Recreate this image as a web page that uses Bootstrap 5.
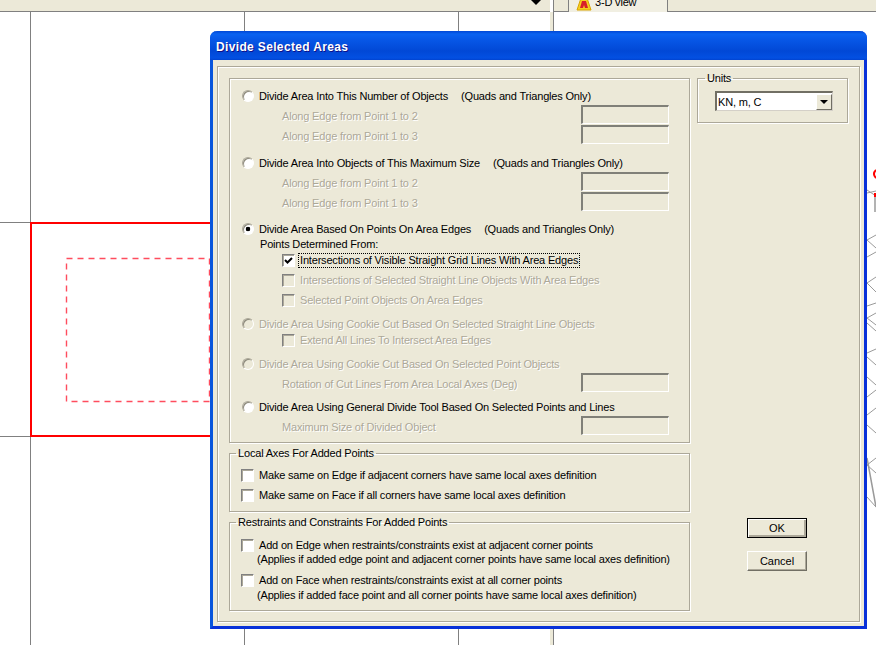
<!DOCTYPE html>
<html lang="en">
<head>
    <meta charset="UTF-8">
    <title>Divide Selected Areas</title>
    <link href="https://cdn.jsdelivr.net/npm/bootstrap@5.3.0/dist/css/bootstrap.min.css" rel="stylesheet">
    <style>
        html, body { margin: 0; background: #fff; overflow: hidden; }
        body { font-family: "Liberation Sans", sans-serif; font-size: 11px; letter-spacing: -.18px; line-height: 16px; color: #000; }
        .desk { position: relative; width: 876px; height: 645px; overflow: hidden; background: #fff; }
        .desk-art { position: absolute; left: 0; top: 0; }

        /* top strip of the main program */
        .top-strip { position: relative; height: 12px; }
        .strip-left { width: 550px; background: #ece9d8; border-bottom: 1px solid #808080; position: relative; }
        .strip-arrow { position: absolute; left: 531px; top: 0; border: 5px solid transparent; border-top-color: #000; border-bottom: 0; }
        .strip-gap { width: 15px; background: #ece9d8; border-bottom: 1px solid #808080; border-left: 1px solid #808080; margin-left: 3px; }
        .strip-tab { width: 100px; background: #f1efe2; border-left: 1px solid #808080; border-right: 1px solid #808080; overflow: hidden; padding-left: 7px; gap: 3px; font-size: 11px; line-height: 10px; }
        .strip-tab span { margin-top: -3px; }
        .strip-rest { background: #ece9d8; border-bottom: 1px solid #808080; }

        /* dialog */
        .xp-window { position: absolute; left: 210px; top: 31px; width: 657px; height: 598px; background: #ece9d8; border-radius: 7px 7px 0 0; border-left: 3px solid #0855dd; border-right: 3px solid #0831d9; border-bottom: 3px solid #0831d9; }
        .xp-title { height: 29px; margin: 0 -3px; padding-left: 6px; border-radius: 7px 7px 0 0; color: #fff; font-family: "Liberation Sans", sans-serif; font-weight: 700; font-size: 12px; letter-spacing: .35px; line-height: 33px; text-shadow: 1px 1px 0 #0f1089; background: linear-gradient(180deg, #0046d5 0, #0a62f0 3px, #0758e8 8px, #0148d6 20px, #0350e2 27px, #0143cf 29px); }
        .xp-frame { margin: 6px 4px 3px; height: 556px; padding: 11px 11px 10px 11px; border: 1px solid #aca899; box-shadow: 1px 1px 0 #fff, inset 1px 1px 0 #fff; gap: 7px; }
        .col-left { width: 462px; }
        .col-right { width: 151px; }
        .etched { border: 1px solid #aca899; box-shadow: 1px 1px 0 #fff, inset 1px 1px 0 #fff; margin: 0; min-width: 0; }
        .etched legend { float: none; width: auto; margin: 0 0 0 -5px; padding: 0 2px; font-size: 11px; line-height: 14px; }
        .group-main { height: 365px; padding: 9px 0 0 12px; }
        .group-axes { height: 66px; margin-top: 3px; padding: 7px 0 0 11px; }
        .group-restr { height: 96px; margin-top: 3px; padding: 8px 0 0 11px; }
        .group-units { height: 52px; padding: 0 14px 0 16px; margin-top: -7px; }
        .group-units legend { margin-left: -9px; }

        .opt-row { height: 16px; white-space: nowrap; }
        .sp-0 { margin-top: 0; } .sp-4 { margin-top: 4px; } .sp-8 { margin-top: 8px; }
        .sp-7 { margin-top: 7px; } .sp-10 { margin-top: 10px; } .sp-11 { margin-top: 11px; }
        .sp-1 { margin-top: -1px; } .sp-5 { margin-top: 5px; } .sp-n2 { margin-top: -2px; }
        .off { color: #aca899; text-shadow: 1px 1px 0 #fff; }
        .ind-sub { margin-left: 40px; }
        .ind-head { margin-left: 18px; }
        .ind-note { margin-left: 16px; }
        .note { margin-left: 8px; }
        .focus-box { outline: 1px dotted #000; outline-offset: 0; padding: 0 1px; line-height: 13px; margin-left: 4px; }

        .xp-radio, .xp-check { appearance: none; -webkit-appearance: none; flex: none; margin: 0; background-color: #fff; }
        .xp-radio { width: 12px; height: 12px; border-radius: 50%; border: 1px solid #aca899; border-right-color: #fff; border-bottom-color: #fff; box-shadow: inset 1px 1px 0 #8d8a7c; }
        .xp-radio:checked { background-image: radial-gradient(circle at 50% 50%, #000 0, #000 2px, transparent 2.6px); }
        .xp-radio:disabled { background-color: #ece9d8; }
        .xp-check { width: 13px; height: 13px; border: 1px solid #fff; border-top-color: #808080; border-left-color: #808080; box-shadow: inset 1px 1px 0 #aca899; }
        .xp-check.ind-check { margin-left: 40px; }
        .xp-check:disabled { background-color: #ece9d8; }
        .xp-check:checked { background-image: url("data:image/svg+xml,%3Csvg xmlns='http://www.w3.org/2000/svg' width='11' height='11'%3E%3Cpath d='M2 5l2.5 2.5L9 3' fill='none' stroke='%23000' stroke-width='2'/%3E%3C/svg%3E"); background-repeat: no-repeat; background-position: center; }
        .gap-lbl { gap: 5px; }

        .sunken { width: 88px; height: 19px; flex: none; margin-left: auto; margin-right: 20px; margin-top: -3px; border: 2px solid #808078; border-right: 1px solid #fff; border-bottom: 1px solid #fff; background: #ece9d8; }
        .combo { width: 118px; height: 20px; margin-top: 6px; margin-left: 1px; background: #fff; border: 2px solid #716f64; border-right-color: #d4d0c8; border-bottom-color: #d4d0c8; border-right-width: 1px; border-bottom-width: 1px; padding-left: 1px; font-size: 11px; }
        .combo-text { line-height: 16px; }
        .combo-btn { width: 16px; height: 16px; margin-left: auto; background: #ece9d8; border: 1px solid #fff; border-right-color: #716f64; border-bottom-color: #716f64; }
        .combo-btn i { border: 4px solid transparent; border-top-color: #000; border-bottom: 0; display: block; }

        .xp-btn { width: 60px; height: 20px; padding: 0; border-radius: 0; font-size: 11px; line-height: 16px; color: #000; background: #ece9d8; border: 1px solid #fff; border-right-color: #716f64; border-bottom-color: #716f64; box-shadow: inset -1px -1px 0 #aca899; }
        .xp-btn.is-default { border: 1px solid #000; box-shadow: inset 1px 1px 0 #fff, inset -2px -2px 0 #aca899; }
        .btn-stack { margin-top: auto; margin-left: 50px; margin-bottom: 40px; gap: 13px; }
    </style>
</head>
<body>
<div class="desk">
    <svg class="desk-art" width="876" height="645">
        <g stroke="#808080" stroke-width="1" shape-rendering="crispEdges">
            <line x1="30.5" y1="12" x2="30.5" y2="645"/>
            <line x1="244.5" y1="12" x2="244.5" y2="645"/>
            <line x1="458.5" y1="12" x2="458.5" y2="645"/>
            <line x1="0" y1="222.5" x2="30" y2="222.5"/>
            <line x1="0" y1="436.5" x2="30" y2="436.5"/>
        </g>
        <rect x="550" y="12" width="3" height="633" fill="#ece9d8"/>
        <rect x="553" y="0" width="1" height="645" fill="#808080"/>
        <rect x="31" y="223" width="190" height="213" fill="none" stroke="#ff0000" stroke-width="2"/>
        <rect x="66.5" y="258.5" width="143" height="143" fill="none" stroke="#ff4d5e" stroke-width="1.4" stroke-dasharray="6 5"/>
        <g stroke="#9a9a9a" stroke-width="1" fill="none">
            <path d="M867 193L876 191M867 190L876 196M867 240L876 235M867 240L876 248M867 257L876 252"/>
            <path d="M867 283L876 277M867 283L876 292M867 306L876 303M867 318L876 313M867 318L876 325M867 323L876 331"/>
            <path d="M867 353L876 349M867 357L876 365M867 377L876 385M867 397L876 390M867 415L876 408M867 425L876 433"/>
            <path d="M867 465L876 458M867 465L876 473M867 497L876 507"/>
            <path d="M867 458L876 507M875 197V212" stroke-width="1.5"/>
        </g>
        <path d="M876 170Q872 174 876 178" fill="none" stroke="#f00" stroke-width="2"/>
        <rect x="874" y="193" width="2" height="4" fill="#f00"/>
    </svg>

    <div class="top-strip d-flex">
        <div class="strip-left"><span class="strip-arrow"></span></div>
        <div class="strip-gap"></div>
        <div class="strip-tab d-flex">
            <svg width="16" height="11" viewBox="0 0 16 11"><path d="M5 -2h6l4 12H1z" fill="#f5d020" stroke="#d9a400"/><path d="M6 1h4l2 7h-3l-1-3-1 3H4z" fill="#d8202a"/></svg>
            <span>3-D view</span>
        </div>
        <div class="strip-rest flex-grow-1"></div>
    </div>

    <div class="xp-window">
        <div class="xp-title">Divide Selected Areas</div>
        <div class="xp-frame d-flex">
            <div class="col-left d-flex flex-column">
                <div class="etched group-main">
                    <div class="opt-row d-flex align-items-center gap-lbl"><input class="xp-radio" type="radio" name="m"><span>Divide Area Into This Number of Objects</span><span class="note">(Quads and Triangles Only)</span></div>
                    <div class="opt-row d-flex align-items-center sp-4 off"><span class="ind-sub">Along Edge from Point 1 to 2</span><span class="sunken"></span></div>
                    <div class="opt-row d-flex align-items-center sp-4 off"><span class="ind-sub">Along Edge from Point 1 to 3</span><span class="sunken"></span></div>

                    <div class="opt-row d-flex align-items-center gap-lbl sp-11"><input class="xp-radio" type="radio" name="m"><span>Divide Area Into Objects of This Maximum Size</span><span class="note">(Quads and Triangles Only)</span></div>
                    <div class="opt-row d-flex align-items-center sp-4 off"><span class="ind-sub">Along Edge from Point 1 to 2</span><span class="sunken"></span></div>
                    <div class="opt-row d-flex align-items-center sp-4 off"><span class="ind-sub">Along Edge from Point 1 to 3</span><span class="sunken"></span></div>

                    <div class="opt-row d-flex align-items-center gap-lbl sp-10"><input class="xp-radio" type="radio" name="m" checked><span>Divide Area Based On Points On Area Edges</span><span class="note">(Quads and Triangles Only)</span></div>
                    <div class="opt-row sp-1"><span class="ind-head">Points Determined From:</span></div>
                    <div class="opt-row d-flex align-items-center sp-0"><input class="xp-check ind-check" type="checkbox" checked><span class="focus-box">Intersections of Visible Straight Grid Lines With Area Edges</span></div>
                    <div class="opt-row d-flex align-items-center gap-lbl sp-4 off"><input class="xp-check ind-check" type="checkbox" disabled><span>Intersections of Selected Straight Line Objects With Area Edges</span></div>
                    <div class="opt-row d-flex align-items-center gap-lbl sp-4 off"><input class="xp-check ind-check" type="checkbox" disabled><span>Selected Point Objects On Area Edges</span></div>

                    <div class="opt-row d-flex align-items-center gap-lbl sp-8 off"><input class="xp-radio" type="radio" name="m" disabled><span>Divide Area Using Cookie Cut Based On Selected Straight Line Objects</span></div>
                    <div class="opt-row d-flex align-items-center gap-lbl sp-0 off"><input class="xp-check ind-check" type="checkbox" disabled><span>Extend All Lines To Intersect Area Edges</span></div>

                    <div class="opt-row d-flex align-items-center gap-lbl sp-8 off"><input class="xp-radio" type="radio" name="m" disabled><span>Divide Area Using Cookie Cut Based On Selected Point Objects</span></div>
                    <div class="opt-row d-flex align-items-center sp-4 off"><span class="ind-sub">Rotation of Cut Lines From Area Local Axes (Deg)</span><span class="sunken"></span></div>

                    <div class="opt-row d-flex align-items-center gap-lbl sp-7"><input class="xp-radio" type="radio" name="m"><span>Divide Area Using General Divide Tool Based On Selected Points and Lines</span></div>
                    <div class="opt-row d-flex align-items-center sp-4 off"><span class="ind-sub">Maximum Size of Divided Object</span><span class="sunken"></span></div>
                </div>

                <fieldset class="etched group-axes">
                    <legend>Local Axes For Added Points</legend>
                    <div class="opt-row d-flex align-items-center gap-lbl"><input class="xp-check" type="checkbox"><span>Make same on Edge if adjacent corners have same local axes definition</span></div>
                    <div class="opt-row d-flex align-items-center gap-lbl sp-4"><input class="xp-check" type="checkbox"><span>Make same on Face if all corners have same local axes definition</span></div>
                </fieldset>

                <fieldset class="etched group-restr">
                    <legend>Restraints and Constraints For Added Points</legend>
                    <div class="opt-row d-flex align-items-center gap-lbl"><input class="xp-check" type="checkbox"><span>Add on Edge when restraints/constraints exist at adjacent corner points</span></div>
                    <div class="opt-row sp-n2"><span class="ind-note">(Applies if added edge point and adjacent corner points have same local axes definition)</span></div>
                    <div class="opt-row d-flex align-items-center gap-lbl sp-5"><input class="xp-check" type="checkbox"><span>Add on Face when restraints/constraints exist at all corner points</span></div>
                    <div class="opt-row sp-1"><span class="ind-note">(Applies if added face point and all corner points have same local axes definition)</span></div>
                </fieldset>
            </div>

            <div class="col-right d-flex flex-column">
                <fieldset class="etched group-units">
                    <legend>Units</legend>
                    <div class="combo d-flex align-items-center">
                        <span class="combo-text">KN, m, C</span>
                        <span class="combo-btn d-flex align-items-center justify-content-center"><i></i></span>
                    </div>
                </fieldset>
                <div class="btn-stack d-flex flex-column">
                    <button type="button" class="btn xp-btn is-default">OK</button>
                    <button type="button" class="btn xp-btn">Cancel</button>
                </div>
            </div>
        </div>
    </div>
</div>
<script src="https://cdn.jsdelivr.net/npm/bootstrap@5.3.0/dist/js/bootstrap.bundle.min.js"></script>
</body>
</html>
